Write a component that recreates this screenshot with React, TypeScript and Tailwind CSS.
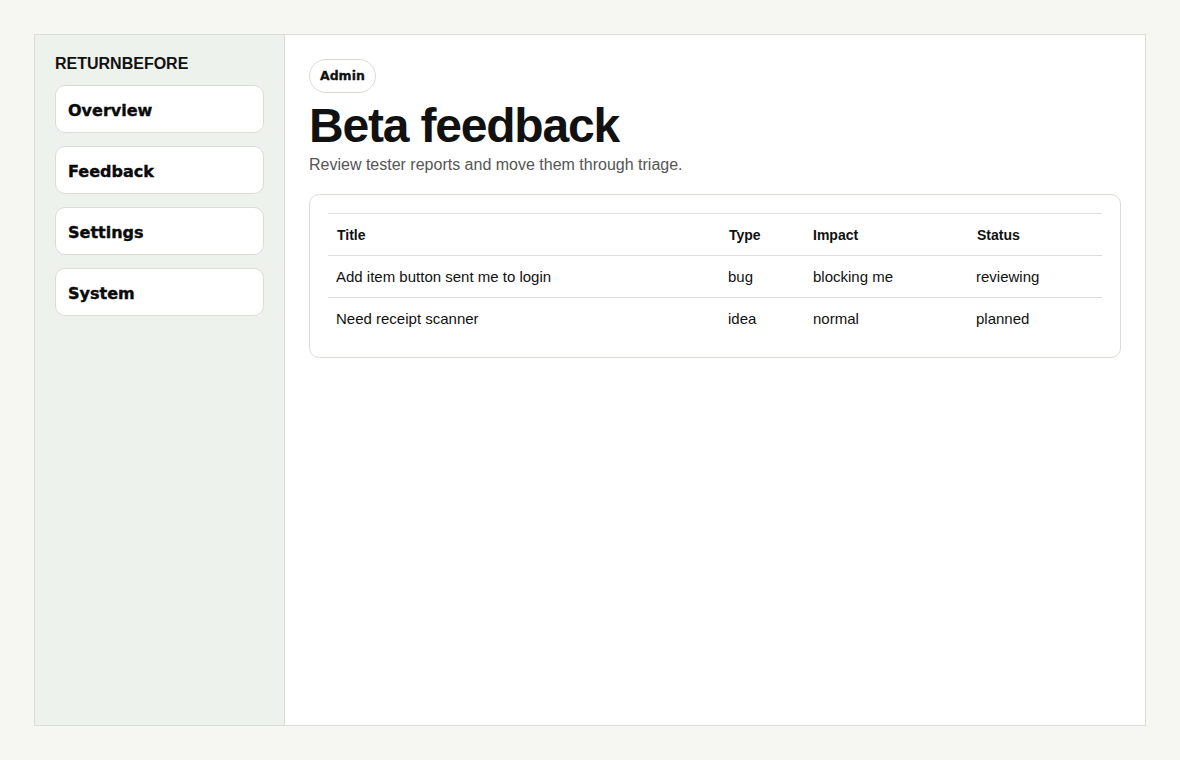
import React from 'react';

interface FeedbackRow {
  id: string;
  title: string;
  type: string;
  impact: string;
  status: string;
}

const navItems = ['Overview', 'Feedback', 'Settings', 'System'];

const rows: FeedbackRow[] = [
  { id: '1', title: 'Add item button sent me to login', type: 'bug', impact: 'blocking me', status: 'reviewing' },
  { id: '2', title: 'Need receipt scanner', type: 'idea', impact: 'normal', status: 'planned' },
];

export default function App() {
  return (
    <div className="h-screen bg-[#f6f6f2] p-[34px] font-['Liberation_Sans',Arial,sans-serif] text-[#111]">
      <div className="flex h-full border border-[#dcdcd4] bg-white">
        <aside className="w-[250px] shrink-0 border-r border-[#dcdcd4] bg-[#eef2ec] px-5 pt-[17px]">
          <div className="mb-[9px] text-base font-bold leading-6">RETURNBEFORE</div>
          <nav className="flex flex-col gap-[13px]">
            {navItems.map((item) => (
              <button
                key={item}
                className="h-12 rounded-[10px] border border-[#dcdcd4] bg-white px-[12px] pt-[3px] text-left font-['Arial_Black','DejaVu_Sans',sans-serif] text-base font-black text-[#0a0a0a] [-webkit-text-stroke:0.4px_#0a0a0a]"
              >
                {item}
              </button>
            ))}
          </nav>
        </aside>
        <main className="flex-1 px-6 pt-6">
          <span className="inline-flex h-[34px] items-center rounded-full border border-[#dcdcd4] bg-white px-[10px] font-['Arial_Black','DejaVu_Sans',sans-serif] text-[12.5px] font-black [-webkit-text-stroke:0.3px_#111]">
            Admin
          </span>
          <h1 className="mt-[7px] text-5xl leading-[1.1] font-bold tracking-tight">Beta feedback</h1>
          <p className="text-base leading-6 text-[#555]">Review tester reports and move them through triage.</p>
          <div className="mt-[17px] rounded-[10px] border border-[#dcdcd4] p-[18px]">
            <table className="w-full border-collapse text-left">
              <thead>
                <tr className="border-t border-[#dddddd]">
                  <th className="h-[42px] w-[392px] px-[9px] pt-[2px] text-sm font-bold">Title</th>
                  <th className="w-[84px] px-[9px] pt-[2px] text-sm font-bold">Type</th>
                  <th className="w-[164px] px-[9px] pt-[2px] text-sm font-bold">Impact</th>
                  <th className="px-[9px] pt-[2px] text-sm font-bold">Status</th>
                </tr>
              </thead>
              <tbody>
                {rows.map((r) => (
                  <tr key={r.id} className="border-t border-[#dddddd] text-[15px]">
                    <td className="h-[42px] px-2 pt-[2px]">{r.title}</td>
                    <td className="px-2 pt-[2px]">{r.type}</td>
                    <td className="pl-[9px] pr-2 pt-[2px]">{r.impact}</td>
                    <td className="px-2 pt-[2px]">{r.status}</td>
                  </tr>
                ))}
              </tbody>
            </table>
          </div>
        </main>
      </div>
    </div>
  );
}
